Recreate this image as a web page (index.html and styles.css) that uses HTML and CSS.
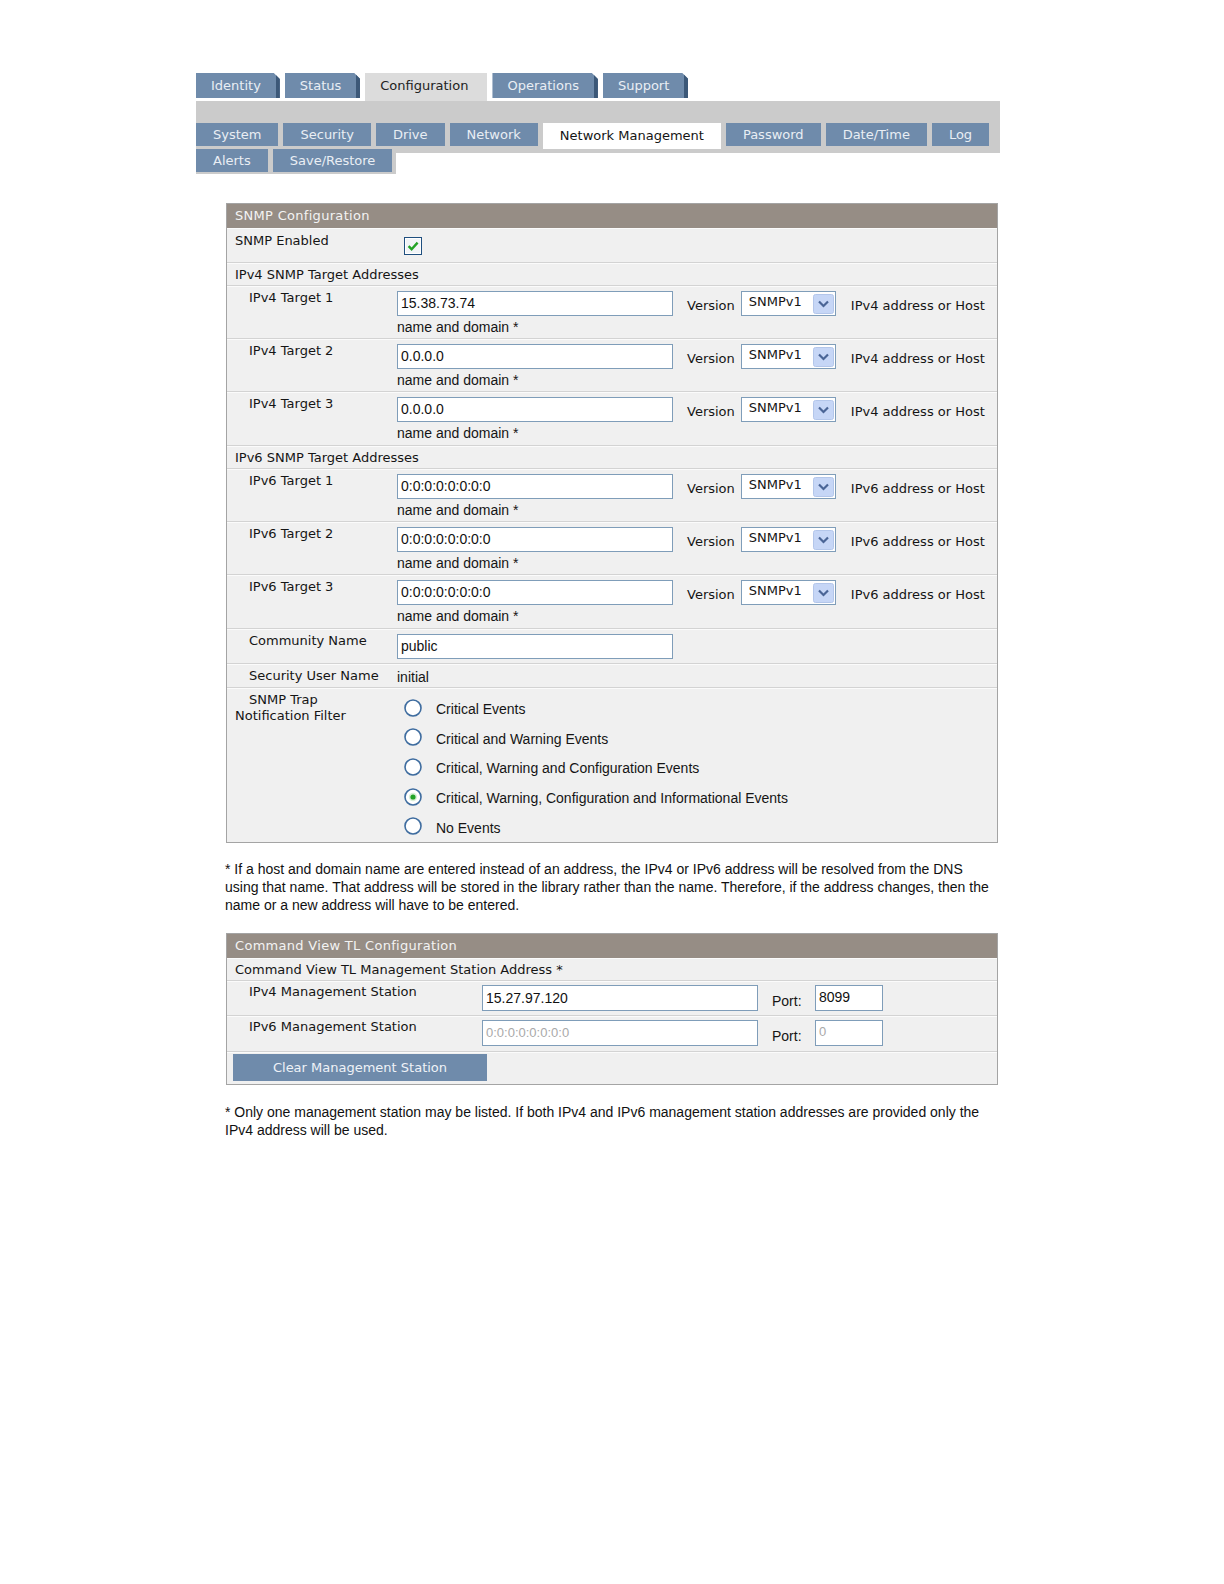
FILE: index.html
```html
<!DOCTYPE html>
<html>
<head>
<meta charset="utf-8">
<title>SNMP Configuration</title>
<link rel="stylesheet" href="styles.css">
</head>
<body>
<div class="page">
  <div class="tabs">
    <div class="tab">Identity</div>
    <div class="tab">Status</div>
    <div class="tab on">Configuration</div>
    <div class="tab">Operations</div>
    <div class="tab">Support</div>
  </div>
  <div class="band">
    <div class="subrow">
      <div class="sub">System</div>
      <div class="sub">Security</div>
      <div class="sub">Drive</div>
      <div class="sub">Network</div>
      <div class="sub on">Network Management</div>
      <div class="sub">Password</div>
      <div class="sub">Date/Time</div>
      <div class="sub">Log</div>
    </div>
    <div class="subrow2">
      <div class="sub">Alerts</div>
      <div class="sub">Save/Restore</div>
    </div>
  </div>

  <div class="panel snmp">
    <div class="phead">SNMP Configuration</div>
    <div class="row r-enabled">
      <div class="lbl top">SNMP Enabled</div>
      <div class="val">
        <svg class="chk" width="18" height="18" viewBox="0 0 18 18"><rect x="0.5" y="0.5" width="17" height="17" fill="#fff" stroke="#1f4f7f"/><rect x="2" y="2" width="14" height="14" fill="#f1f4f7"/><path d="M4.6 9.2 L7.6 12.2 L13.6 5.6" fill="none" stroke="#22a326" stroke-width="2.4"/></svg>
      </div>
    </div>
    <div class="row r-sec"><div class="sect">IPv4 SNMP Target Addresses</div></div>

    <div class="row r-target">
      <div class="lbl">IPv4 Target 1</div>
      <div class="val">
        <div class="line">
          <div class="inp">15.38.73.74</div>
          <span class="ver">Version</span>
          <div class="sel"><span>SNMPv1</span><svg class="arr" width="21" height="20" viewBox="0 0 21 20"><rect x="0.5" y="0.5" width="20" height="19" rx="2" fill="#c6d6f6" stroke="#b3c6ea"/><path d="M6 7.5 L10.5 12 L15 7.5" fill="none" stroke="#4a6596" stroke-width="2.2"/></svg></div>
          <span class="hint">IPv4 address or Host</span>
        </div>
        <div class="note">name and domain *</div>
      </div>
    </div>
    <div class="row r-target">
      <div class="lbl">IPv4 Target 2</div>
      <div class="val">
        <div class="line">
          <div class="inp">0.0.0.0</div>
          <span class="ver">Version</span>
          <div class="sel"><span>SNMPv1</span><svg class="arr" width="21" height="20" viewBox="0 0 21 20"><rect x="0.5" y="0.5" width="20" height="19" rx="2" fill="#c6d6f6" stroke="#b3c6ea"/><path d="M6 7.5 L10.5 12 L15 7.5" fill="none" stroke="#4a6596" stroke-width="2.2"/></svg></div>
          <span class="hint">IPv4 address or Host</span>
        </div>
        <div class="note">name and domain *</div>
      </div>
    </div>
    <div class="row r-target last">
      <div class="lbl">IPv4 Target 3</div>
      <div class="val">
        <div class="line">
          <div class="inp">0.0.0.0</div>
          <span class="ver">Version</span>
          <div class="sel"><span>SNMPv1</span><svg class="arr" width="21" height="20" viewBox="0 0 21 20"><rect x="0.5" y="0.5" width="20" height="19" rx="2" fill="#c6d6f6" stroke="#b3c6ea"/><path d="M6 7.5 L10.5 12 L15 7.5" fill="none" stroke="#4a6596" stroke-width="2.2"/></svg></div>
          <span class="hint">IPv4 address or Host</span>
        </div>
        <div class="note">name and domain *</div>
      </div>
    </div>

    <div class="row r-sec"><div class="sect">IPv6 SNMP Target Addresses</div></div>

    <div class="row r-target">
      <div class="lbl">IPv6 Target 1</div>
      <div class="val">
        <div class="line">
          <div class="inp">0:0:0:0:0:0:0:0</div>
          <span class="ver">Version</span>
          <div class="sel"><span>SNMPv1</span><svg class="arr" width="21" height="20" viewBox="0 0 21 20"><rect x="0.5" y="0.5" width="20" height="19" rx="2" fill="#c6d6f6" stroke="#b3c6ea"/><path d="M6 7.5 L10.5 12 L15 7.5" fill="none" stroke="#4a6596" stroke-width="2.2"/></svg></div>
          <span class="hint">IPv6 address or Host</span>
        </div>
        <div class="note">name and domain *</div>
      </div>
    </div>
    <div class="row r-target">
      <div class="lbl">IPv6 Target 2</div>
      <div class="val">
        <div class="line">
          <div class="inp">0:0:0:0:0:0:0:0</div>
          <span class="ver">Version</span>
          <div class="sel"><span>SNMPv1</span><svg class="arr" width="21" height="20" viewBox="0 0 21 20"><rect x="0.5" y="0.5" width="20" height="19" rx="2" fill="#c6d6f6" stroke="#b3c6ea"/><path d="M6 7.5 L10.5 12 L15 7.5" fill="none" stroke="#4a6596" stroke-width="2.2"/></svg></div>
          <span class="hint">IPv6 address or Host</span>
        </div>
        <div class="note">name and domain *</div>
      </div>
    </div>
    <div class="row r-target last">
      <div class="lbl">IPv6 Target 3</div>
      <div class="val">
        <div class="line">
          <div class="inp">0:0:0:0:0:0:0:0</div>
          <span class="ver">Version</span>
          <div class="sel"><span>SNMPv1</span><svg class="arr" width="21" height="20" viewBox="0 0 21 20"><rect x="0.5" y="0.5" width="20" height="19" rx="2" fill="#c6d6f6" stroke="#b3c6ea"/><path d="M6 7.5 L10.5 12 L15 7.5" fill="none" stroke="#4a6596" stroke-width="2.2"/></svg></div>
          <span class="hint">IPv6 address or Host</span>
        </div>
        <div class="note">name and domain *</div>
      </div>
    </div>

    <div class="row r-comm">
      <div class="lbl">Community Name</div>
      <div class="val"><div class="inp">public</div></div>
    </div>
    <div class="row r-user">
      <div class="lbl">Security User Name</div>
      <div class="val"><span class="plain">initial</span></div>
    </div>
    <div class="row r-trap">
      <div class="lbl trap">SNMP Trap Notification Filter</div>
      <div class="val radios">
        <div class="radio"><svg width="18" height="18" viewBox="0 0 18 18"><circle cx="9" cy="9" r="8" fill="#fff" stroke="#3e6c9f" stroke-width="1.6"/></svg><span>Critical Events</span></div>
        <div class="radio"><svg width="18" height="18" viewBox="0 0 18 18"><circle cx="9" cy="9" r="8" fill="#fff" stroke="#3e6c9f" stroke-width="1.6"/></svg><span>Critical and Warning Events</span></div>
        <div class="radio"><svg width="18" height="18" viewBox="0 0 18 18"><circle cx="9" cy="9" r="8" fill="#fff" stroke="#3e6c9f" stroke-width="1.6"/></svg><span>Critical, Warning and Configuration Events</span></div>
        <div class="radio"><svg width="18" height="18" viewBox="0 0 18 18"><circle cx="9" cy="9" r="8" fill="#fff" stroke="#3e6c9f" stroke-width="1.6"/><circle cx="9" cy="9" r="4.2" fill="#d9efd9"/><circle cx="9" cy="9" r="2.6" fill="#22a326"/></svg><span>Critical, Warning, Configuration and Informational Events</span></div>
        <div class="radio"><svg width="18" height="18" viewBox="0 0 18 18"><circle cx="9" cy="9" r="8" fill="#fff" stroke="#3e6c9f" stroke-width="1.6"/></svg><span>No Events</span></div>
      </div>
    </div>
  </div>

  <p class="foot first">* If a host and domain name are entered instead of an address, the IPv4 or IPv6 address will be resolved from the DNS using that name. That address will be stored in the library rather than the name. Therefore, if the address changes, then the name or a new address will have to be entered.</p>

  <div class="panel cv">
    <div class="phead">Command View TL Configuration</div>
    <div class="row r-sec"><div class="sect">Command View TL Management Station Address *</div></div>
    <div class="row r-mgmt">
      <div class="lbl wide">IPv4 Management Station</div>
      <div class="val line">
        <div class="inp mid">15.27.97.120</div>
        <span class="port">Port:</span>
        <div class="inp small">8099</div>
      </div>
    </div>
    <div class="row r-mgmt r-mgmt6">
      <div class="lbl wide">IPv6 Management Station</div>
      <div class="val line">
        <div class="inp mid dis">0:0:0:0:0:0:0:0</div>
        <span class="port">Port:</span>
        <div class="inp small dis">0</div>
      </div>
    </div>
    <div class="row r-btn">
      <div class="btn">Clear Management Station</div>
    </div>
  </div>

  <p class="foot second">* Only one management station may be listed. If both IPv4 and IPv6 management station addresses are provided only the IPv4 address will be used.</p>
</div>
</body>
</html>
```

FILE: styles.css
```css
html, body {
  margin: 0;
  padding: 0;
  background: #ffffff;
}

body {
  font-family: "DejaVu Sans", Verdana, sans-serif;
  font-size: 13px;
  color: #151515;
}

.page {
  padding: 73px 0 0 196px;
  width: 804px;
}

/* top tabs */
.tabs {
  display: flex;
  align-items: flex-start;
  gap: 5px;
  height: 28px;
}

.tab {
  height: 25px;
  line-height: 25px;
  padding: 0 15px 0 15px;
  background: #6f8bab;
  color: #e9eef4;
  border-right: 4px solid #3c5878;
  clip-path: polygon(0 0, calc(100% - 6px) 0, 100% 6px, 100% 100%, 0 100%);
}

.tab.on {
  height: 28px;
  background: #dcdcdc;
  color: #222;
  border-right: 4px solid #dcdcdc;
  clip-path: none;
}

/* sub tabs */
.band {
  height: 52px;
  box-sizing: border-box;
  padding-top: 22px;
  background: #cbcbcb;
}

.subrow {
  display: flex;
  align-items: flex-start;
  gap: 5px;
  height: 23px;
}

.subrow2 {
  display: inline-flex;
  gap: 5px;
  padding: 3px 4px 2px 0;
  background: #cbcbcb;
}

.sub {
  height: 23px;
  line-height: 23px;
  padding: 0 17px;
  background: #6f8bab;
  color: #e9eef4;
  white-space: nowrap;
}

.sub.on {
  height: 26px;
  line-height: 25px;
  background: #ffffff;
  color: #151515;
}

/* panels */
.panel {
  margin: 50px 0 0 30px;
  width: 772px;
  box-sizing: border-box;
  border: 1px solid #a4a4a4;
  background: #f0f0f0;
}

.phead {
  height: 24px;
  line-height: 24px;
  padding-left: 8px;
  background: #968d85;
  color: #f3f3f3;
  letter-spacing: 0.3px;
}

.row {
  display: flex;
  box-sizing: border-box;
  border-top: 1px solid #fbfbfb;
  border-bottom: 1px solid #d3d3d3;
}

.lbl {
  width: 170px;
  flex: none;
  box-sizing: border-box;
  padding: 2px 0 0 22px;
  line-height: 18px;
  white-space: nowrap;
}

.lbl.top {
  padding-left: 8px;
  padding-top: 3px;
}

.lbl.wide {
  width: 255px;
  padding-top: 1px;
}

.sect {
  padding-left: 8px;
  line-height: 21px;
}

.val {
  flex: 1;
}

.r-enabled { height: 35px; }
.r-sec { height: 23px; }
.r-target { height: 53px; }
.r-target.last { height: 54px; }
.r-comm { height: 35px; }
.r-user { height: 24px; }
.r-trap { height: 154px; border-bottom: none; }

.chk {
  display: block;
  margin: 8px 0 0 7px;
}

.r-target .val,
.r-comm .val {
  padding-top: 4px;
}

.line {
  display: flex;
  align-items: center;
}

.inp {
  width: 276px;
  height: 25px;
  box-sizing: border-box;
  border: 1px solid #7f9db9;
  background: #ffffff;
  padding: 0 3px;
  font-family: "Liberation Sans", Arial, sans-serif;
  font-size: 14px;
  line-height: 23px;
  color: #111;
}

.ver {
  margin-left: 14px;
  padding-top: 4px;
}

.sel {
  margin-left: 6px;
  width: 95px;
  height: 25px;
  box-sizing: border-box;
  border: 1px solid #7f9db9;
  background: #ffffff;
  display: flex;
  align-items: center;
  justify-content: space-between;
  padding: 0 1px 0 7px;
}

.sel span {
  line-height: 18px;
  margin-top: -3px;
}

.arr {
  display: block;
}

.hint {
  margin-left: 15px;
  padding-top: 4px;
}

.note {
  margin-top: 2px;
  line-height: 18px;
  font-family: "Liberation Sans", Arial, sans-serif;
  font-size: 14px;
}

.plain {
  display: block;
  padding-top: 3px;
  line-height: 18px;
  font-family: "Liberation Sans", Arial, sans-serif;
  font-size: 14px;
}

.lbl.trap {
  white-space: normal;
  width: 170px;
  padding: 3px 20px 0 8px;
  text-indent: 14px;
  line-height: 16px;
}

.radios {
  padding-top: 4px;
}

.radio {
  display: flex;
  align-items: center;
  height: 29.6px;
  padding-left: 7px;
  font-family: "Liberation Sans", Arial, sans-serif;
  font-size: 14px;
}

.radio svg {
  display: block;
  flex: none;
}

.radio span {
  margin-left: 14px;
  padding-top: 3px;
}

/* footnotes */
.foot {
  margin: 17px 0 0 29px;
  width: 771px;
  font-family: "Liberation Sans", Arial, sans-serif;
  font-size: 14px;
  line-height: 18px;
  color: #111;
}

.foot.second {
  margin-top: 18px;
  width: 776px;
}

.panel.cv {
  margin-top: 19px;
}

.r-mgmt { height: 35px; }
.r-mgmt6 { height: 36px; }

.r-mgmt .val {
  padding-top: 3px;
  align-self: flex-start;
}

.inp.mid {
  width: 276px;
  height: 26px;
  line-height: 24px;
}

.inp.small {
  width: 68px;
  height: 26px;
  line-height: 22px;
}

.inp.dis {
  color: #a9a9a9;
  font-size: 13px;
}

.port {
  margin-left: 14px;
  width: 43px;
  padding-top: 5px;
  font-family: "Liberation Sans", Arial, sans-serif;
  font-size: 14px;
}

.r-btn {
  height: 32px;
  border-bottom: none;
  padding: 1px 0 0 6px;
}

.btn {
  width: 254px;
  height: 27px;
  line-height: 27px;
  text-align: center;
  background: #6f8bab;
  color: #eef2f7;
}
```
